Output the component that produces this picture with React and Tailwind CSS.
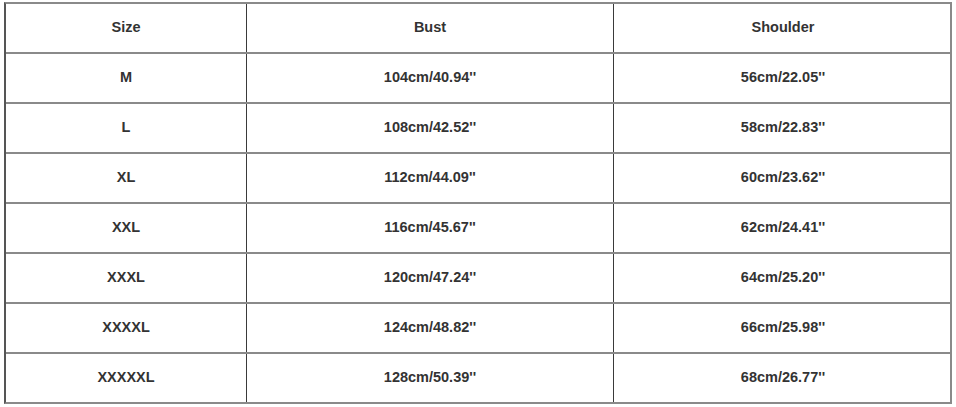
import React from "react";

const rows = [
  ["M", "104cm/40.94''", "56cm/22.05''"],
  ["L", "108cm/42.52''", "58cm/22.83''"],
  ["XL", "112cm/44.09''", "60cm/23.62''"],
  ["XXL", "116cm/45.67''", "62cm/24.41''"],
  ["XXXL", "120cm/47.24''", "64cm/25.20''"],
  ["XXXXL", "124cm/48.82''", "66cm/25.98''"],
  ["XXXXXL", "128cm/50.39''", "68cm/26.77''"],
];

function Row({ cells, first }) {
  return (
    <div className={`grid grid-cols-[240px_367px_339px] ${first ? "h-[48px]" : "h-[50px] border-t-2 border-[#8a8a8a]"}`}>
      {cells.map((c, i) => (
        <div
          key={i}
          className={`flex items-center justify-center text-[14.5px] font-bold text-[#333] ${i > 0 ? "border-l border-[#3a3a3a]" : ""}`}
        >
          {c}
        </div>
      ))}
    </div>
  );
}

export default function App() {
  return (
    <div className="w-[956px] h-[407px] bg-white pt-[2px] pl-[4px]" style={{ fontFamily: '"Liberation Sans", Arial, sans-serif' }}>
      <div className="w-[948px] border-2 border-[#8a8a8a] border-l-[#555]">
        <Row cells={["Size", "Bust", "Shoulder"]} first />
        {rows.map((r, i) => (
          <Row key={i} cells={r} />
        ))}
      </div>
    </div>
  );
}
